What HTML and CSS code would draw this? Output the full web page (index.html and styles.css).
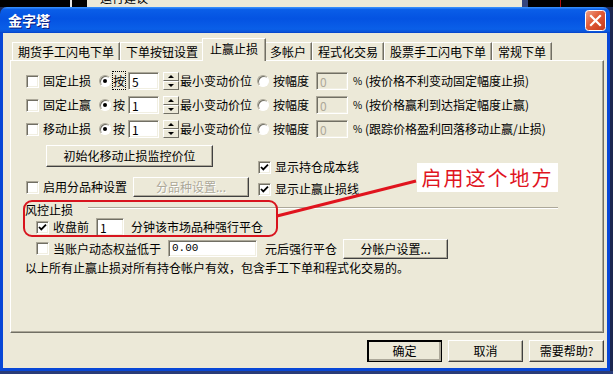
FILE: index.html
```html
<!DOCTYPE html>
<html lang="zh-CN">
<head>
    <meta charset="UTF-8">
    <title>金字塔</title>
    <link rel="stylesheet" href="styles.css">
</head>
<body>
    <!-- 窗口后面的桌面残留 -->
    <div class="desk">
        <span class="dk w70"></span>
        <span class="lt w2"></span>
        <span class="dk w15"></span>
        <span class="bg w435"><em class="cut">运行建议</em></span>
        <span class="nv w6"></span>
        <span class="dk grow"><i class="redline"></i></span>
    </div>

    <div class="window">
        <div class="titlebar">
            <span class="title">金字塔</span>
            <span class="close">
                <svg width="21" height="21" viewBox="0 0 21 21">
                    <defs>
                        <linearGradient id="cg" x1="0" y1="0" x2="1" y2="1">
                            <stop offset="0" stop-color="#F0A48C"/>
                            <stop offset="0.45" stop-color="#E05A36"/>
                            <stop offset="1" stop-color="#C4391B"/>
                        </linearGradient>
                    </defs>
                    <rect x="0.5" y="0.5" width="20" height="20" rx="3" fill="url(#cg)" stroke="#fff"/>
                    <path d="M6 6 L15 15 M15 6 L6 15" stroke="#fff" stroke-width="2.2" stroke-linecap="square"/>
                </svg>
            </span>
        </div>

        <div class="frame">
            <div class="tabs">
                <span class="tab">期货手工闪电下单</span>
                <span class="tab">下单按钮设置</span>
                <span class="tab active">止赢止损</span>
                <span class="tab">多帐户</span>
                <span class="tab">程式化交易</span>
                <span class="tab">股票手工闪电下单</span>
                <span class="tab">常规下单</span>
            </div>

            <div class="panel">
                <div class="opt-rows">
                    <div class="opt-row">
                        <span class="cb"></span>
                        <span>固定止损</span>
                        <span class="rd on"></span>
                        <span><b class="focus">按</b></span>
                        <span class="edit">5</span>
                        <span class="spin"><i class="up"></i><i class="dn"></i></span>
                        <span>最小变动价位</span>
                        <span class="rd"></span>
                        <span>按幅度</span>
                        <span class="edit off">0</span>
                        <span class="pct">%</span>
                        <span>(按价格不利变动固定幅度止损)</span>
                    </div>
                    <div class="opt-row">
                        <span class="cb"></span>
                        <span>固定止赢</span>
                        <span class="rd on"></span>
                        <span>按</span>
                        <span class="edit">1</span>
                        <span class="spin"><i class="up"></i><i class="dn"></i></span>
                        <span>最小变动价位</span>
                        <span class="rd"></span>
                        <span>按幅度</span>
                        <span class="edit off">0</span>
                        <span class="pct">%</span>
                        <span>(按价格赢利到达指定幅度止赢)</span>
                    </div>
                    <div class="opt-row">
                        <span class="cb"></span>
                        <span>移动止损</span>
                        <span class="rd on"></span>
                        <span>按</span>
                        <span class="edit">1</span>
                        <span class="spin"><i class="up"></i><i class="dn"></i></span>
                        <span>最小变动价位</span>
                        <span class="rd"></span>
                        <span>按幅度</span>
                        <span class="edit off">0</span>
                        <span class="pct">%</span>
                        <span>(跟踪价格盈利回落移动止赢/止损)</span>
                    </div>
                </div>

                <div class="tools">
                    <div class="tools-left">
                        <span class="btn init">初始化移动止损监控价位</span>
                        <div class="tool-row">
                            <span class="cb"></span>
                            <span class="lbl">启用分品种设置</span>
                            <span class="btn sub dis">分品种设置...</span>
                        </div>
                    </div>
                    <div class="tools-right">
                        <div class="chk-row"><span class="cb checked"><svg width="9" height="9" viewBox="0 0 9 9"><path d="M1 4 L3.3 6.4 L8 1.6" fill="none" stroke="#000" stroke-width="1.8"/></svg></span><span class="lbl">显示持仓成本线</span></div>
                        <div class="chk-row"><span class="cb checked"><svg width="9" height="9" viewBox="0 0 9 9"><path d="M1 4 L3.3 6.4 L8 1.6" fill="none" stroke="#000" stroke-width="1.8"/></svg></span><span class="lbl">显示止赢止损线</span></div>
                    </div>
                </div>

                <div class="group">
                    <div class="group-head">
                        <span>风控止损</span>
                        <span class="rule"></span>
                    </div>
                    <div class="g-row close-row">
                        <span class="cb checked"><svg width="9" height="9" viewBox="0 0 9 9"><path d="M1 4 L3.3 6.4 L8 1.6" fill="none" stroke="#000" stroke-width="1.8"/></svg></span>
                        <span class="lbl">收盘前</span>
                        <span class="edit mins">1</span>
                        <span>分钟该市场品种强行平仓</span>
                    </div>
                    <div class="g-row equity-row">
                        <span class="cb"></span>
                        <span class="lbl">当账户动态权益低于</span>
                        <span class="edit money">0.00</span>
                        <span class="after">元后强行平仓</span>
                        <span class="btn acct">分帐户设置...</span>
                    </div>
                </div>

                <p class="note">以上所有止赢止损对所有持仓帐户有效，包含手工下单和程式化交易的。</p>
            </div>

            <div class="actions">
                <span class="btn act default">确定</span>
                <span class="btn act">取消</span>
                <span class="btn act">需要帮助?</span>
            </div>
        </div>
    </div>
    <div class="floor"></div>

    <!-- 红色标注 -->
    <div class="mark-box"></div>
    <svg class="mark-line" width="150" height="46" viewBox="0 0 150 46">
        <line x1="5" y1="41" x2="144" y2="6" stroke="#E0141E" stroke-width="3"/>
    </svg>
    <div class="mark-label">启用这个地方</div>
</body>
</html>
```

FILE: styles.css
```css
body {
    margin: 0;
    width: 613px;
    height: 374px;
    overflow: hidden;
    position: relative;
    background: #1d2750;
    font-family: "Noto Sans CJK SC", sans-serif;
    font-size: 12px;
    line-height: 1;
    color: #000;
}

/* 桌面残留 */
.desk {
    display: flex;
    height: 7px;
    overflow: hidden;
}
.desk span { height: 7px; position: relative; }
.dk { background: #000; }
.lt { background: #e6e6e6; }
.bg { background: #ECE9D8; }
.nv { background: #34457e; }
.w70 { width: 70px; }
.w2 { width: 2px; }
.w15 { width: 15px; }
.w435 { width: 435px; }
.w6 { width: 6px; }
.grow { flex: 1; }
.cut {
    position: absolute;
    left: 13px;
    top: -8px;
    font-style: normal;
    font-size: 12px;
    color: #000;
}
.redline {
    position: absolute;
    left: 32px;
    top: 0;
    width: 1px;
    height: 7px;
    background: #b01010;
}

/* 窗口 */
.window {
    width: 610px;
    height: 364px;
    display: flex;
    flex-direction: column;
}
.titlebar {
    height: 26px;
    border-radius: 7px 7px 0 0;
    background: linear-gradient(#3d95ff 0%, #0a5ee8 10%, #0453e2 45%, #0a5fe8 85%, #0b54d8 95%, #0440c8 100%);
    display: flex;
    align-items: center;
    justify-content: space-between;
    padding: 0 4px 0 8px;
    box-sizing: border-box;
}
.title {
    color: #fff;
    font-weight: bold;
    font-size: 14px;
    text-shadow: 1px 1px 0 #0a1a7a;
}
.close { width: 21px; height: 21px; margin-top: 1px; }

.frame {
    flex: 1;
    background: #ECE9D8;
    border: 3px solid #0847d6;
    border-top: 0;
    padding: 5px 3px 0 7px;
    display: flex;
    flex-direction: column;
}

/* 标签页 */
.tabs {
    display: flex;
    align-items: flex-end;
    height: 22px;
    padding-left: 2px;
}
.tab {
    height: 18px;
    line-height: 18px;
    padding: 0 5px;
    border: 1px solid;
    border-color: #fff #716F64 transparent #fff;
    border-bottom: 0;
    box-sizing: border-box;
    box-shadow: inset -1px 0 0 #ACA899;
    white-space: nowrap;
}
.tab.active {
    height: 23px;
    line-height: 20px;
    margin: 0 -2px -1px;
    padding: 0 7px;
    background: #ECE9D8;
    position: relative;
    z-index: 1;
}

.panel {
    height: 273px;
    box-sizing: border-box;
    border: 1px solid;
    border-color: #fff #716F64 #716F64 #fff;
    box-shadow: inset -1px -1px 0 #ACA899;
    padding: 11px 0 0 15px;
}

/* 控件 */
.cb {
    width: 13px;
    height: 13px;
    box-sizing: border-box;
    background: #fff;
    border: 1px solid;
    border-color: #ACA899 #fff #fff #ACA899;
    box-shadow: inset 1px 1px 0 #716F64, inset -1px -1px 0 #F1EFE2;
    display: flex;
    align-items: center;
    justify-content: center;
}
.rd {
    width: 12px;
    height: 12px;
    box-sizing: border-box;
    border-radius: 50%;
    background: #fff;
    border: 1px solid;
    border-color: #ACA899 #fff #fff #ACA899;
    box-shadow: inset 1px 1px 0 #716F64;
    position: relative;
}
.rd.on::after {
    content: "";
    position: absolute;
    left: 3px;
    top: 3px;
    width: 4px;
    height: 4px;
    border-radius: 50%;
    background: #000;
}
.edit {
    height: 18px;
    box-sizing: border-box;
    background: #fff;
    border: 1px solid;
    border-color: #ACA899 #fff #fff #ACA899;
    box-shadow: inset 1px 1px 0 #716F64, inset -1px -1px 0 #F1EFE2;
    padding: 3px 0 0 3px;
    width: 31px;
}
.edit.off {
    background: #ECE9D8;
    color: #ACA899;
    width: 32px;
}
.btn {
    box-sizing: border-box;
    border: 1px solid;
    border-color: #fff #404040 #404040 #fff;
    box-shadow: inset -1px -1px 0 #ACA899;
    background: #ECE9D8;
    display: flex;
    align-items: center;
    justify-content: center;
}
.btn.dis {
    color: #ACA899;
    text-shadow: 1px 1px 0 #fff;
}
.spin {
    width: 16px;
    height: 18px;
    display: flex;
    flex-direction: column;
}
.spin i {
    flex: 1;
    box-sizing: border-box;
    border: 1px solid;
    border-color: #fff #716F64 #716F64 #fff;
    background: #ECE9D8;
    position: relative;
}
.spin i::after {
    content: "";
    position: absolute;
    left: 4px;
    top: 2px;
    border-left: 3px solid transparent;
    border-right: 3px solid transparent;
}
.spin .up::after { border-bottom: 3px solid #000; }
.spin .dn::after { border-top: 3px solid #000; }
.focus {
    font-weight: normal;
    outline: 1px dotted #000;
    outline-offset: 0;
}
.pct { font-size: 10px; }

/* 三行止损选项 */
.opt-rows {
    display: flex;
    flex-direction: column;
    gap: 6px;
}
.opt-row {
    display: grid;
    grid-template-columns: 17px 56px 14px 15px 35px 17px 77px 16px 43px 37px 12px auto;
    height: 18px;
    align-items: center;
    white-space: nowrap;
}

/* 初始化按钮和显示选项 */
.tools {
    display: grid;
    grid-template-columns: 232px auto;
    margin-top: 7px;
}
.btn.init {
    width: 167px;
    height: 22px;
    margin-left: 20px;
}
.tool-row {
    display: flex;
    align-items: center;
    height: 20px;
    margin-top: 10px;
}
.lbl { margin-left: 4px; }
.btn.sub {
    width: 116px;
    height: 20px;
    margin-left: 6px;
}
.tools-right {
    padding-top: 14px;
    display: flex;
    flex-direction: column;
    gap: 6px;
}
.chk-row {
    display: flex;
    align-items: center;
    height: 16px;
}

/* 风控止损 */
.group { margin-top: 7px; }
.group-head {
    display: flex;
    height: 12px;
    margin-left: -1px;
}
.rule {
    width: 470px;
    margin: 3px 0 0 15px;
    height: 0;
    border-top: 1px solid #ACA899;
    border-bottom: 1px solid #fff;
}
.g-row {
    display: flex;
    align-items: center;
    padding-left: 10px;
    margin-top: 2px;
}
.close-row { height: 18px; }
.edit.mins {
    width: 28px;
    margin: 0 7px 0 7px;
}
.equity-row { height: 21px; }
.edit.money {
    width: 89px;
    height: 17px;
    margin: 0 8px 0 7px;
    font-family: "Liberation Mono", monospace;
    font-size: 11px;
    padding-top: 2px;
}
.btn.acct {
    width: 105px;
    height: 20px;
    margin-left: 6px;
}
.note {
    margin: 3px 0 0 -1px;
    height: 14px;
}

/* 底部按钮 */
.actions {
    display: flex;
    justify-content: flex-end;
    gap: 6px;
    margin-top: 7px;
}
.btn.act {
    width: 75px;
    height: 22px;
}
.btn.default {
    outline: 1px solid #000;
    outline-offset: -1px;
    border-color: #fff #404040 #404040 #fff;
    box-shadow: inset 1px 1px 0 #000, inset -2px -2px 0 #ACA899;
}

.floor {
    height: 3px;
    background: #2a3c78;
}

/* 红色标注 */
.mark-box {
    position: absolute;
    left: 23px;
    top: 200px;
    width: 255px;
    height: 37px;
    box-sizing: border-box;
    border: 2.5px solid #D8141E;
    border-radius: 9px;
}
.mark-line {
    position: absolute;
    left: 272px;
    top: 175px;
}
.mark-label {
    position: absolute;
    left: 417px;
    top: 163px;
    width: 141px;
    height: 29px;
    background: #fff;
    color: #E0141E;
    font-size: 20px;
    letter-spacing: 2px;
    line-height: 29px;
    text-align: center;
}
```
